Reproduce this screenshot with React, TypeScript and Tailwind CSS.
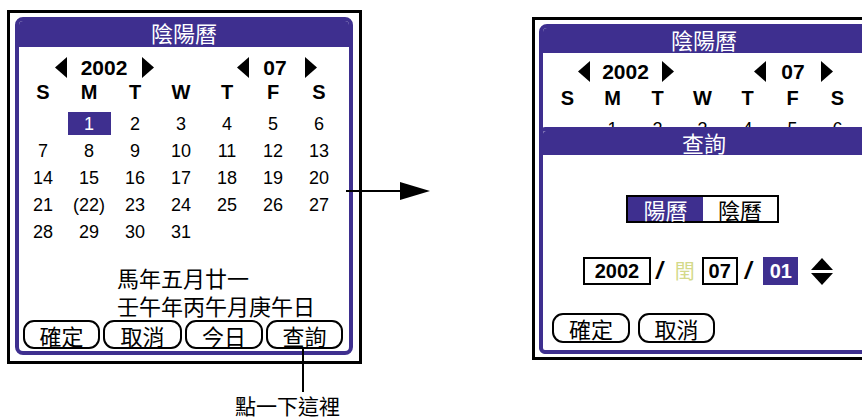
const LAT = "font-['Liberation_Sans',sans-serif]";
const CJK = "font-['Noto_Sans_CJK_TC','Noto_Sans_CJK_SC',sans-serif]";

const Tri = ({ dir }: { dir: "l" | "r" }) => (
  <svg width="12" height="21" viewBox="0 0 12 21" className="shrink-0">
    <polygon points={dir === "l" ? "12,0 12,21 0,10.5" : "0,0 0,21 12,10.5"} fill="black" />
  </svg>
);

const weekdays = ["S", "M", "T", "W", "T", "F", "S"];
const days: (string | null)[] = [
  null, "1", "2", "3", "4", "5", "6",
  "7", "8", "9", "10", "11", "12", "13",
  "14", "15", "16", "17", "18", "19", "20",
  "21", "(22)", "23", "24", "25", "26", "27",
  "28", "29", "30", "31", null, null, null,
];

const YearRow = ({ wide }: { wide: boolean }) => (
  <div className={`flex h-[22px] items-center ${LAT} text-[21px] font-bold leading-none ${wide ? "ml-[36px]" : "ml-[35px]"}`}>
    <Tri dir="l" />
    <span className={`text-center ${wide ? "ml-[13px] w-[48px]" : "ml-[11px] w-[49px]"}`}>2002</span>
    <span className={wide ? "ml-[14px]" : "ml-[12px]"}><Tri dir="r" /></span>
    <span className={wide ? "ml-[83px]" : "ml-[80px]"}><Tri dir="l" /></span>
    <span className={`text-center ${wide ? "ml-[14px] w-[24px]" : "ml-[15px] w-[24px]"}`}>07</span>
    <span className={wide ? "ml-[18px]" : "ml-[16px]"}><Tri dir="r" /></span>
  </div>
);

// wide = the full calendar on the left; narrow = the one half hidden under the dialog
const Calendar = ({ wide }: { wide: boolean }) => {
  const cols = wide ? "grid-cols-[repeat(7,46px)] ml-[1px]" : "grid-cols-[repeat(7,45px)] ml-[2px]";
  const shown = wide ? days : days.slice(0, 7);
  return (
    <>
      <div className={`grid ${cols} h-[20px] items-center ${LAT} text-[20px] font-bold leading-none ${wide ? "mt-[4px]" : "mt-[6px]"}`}>
        {weekdays.map((d, i) => (
          <span key={i} className="text-center">{d}</span>
        ))}
      </div>
      <div className={`grid ${cols} auto-rows-[27px] ${LAT} text-[18px] leading-none ${wide ? "mt-[8px]" : "mt-[7px]"}`}>
        {shown.map((d, i) => (
          <div key={i} className="flex items-center justify-center">
            {d === "1" && wide ? (
              <span className="flex h-[23px] w-[43px] items-center justify-center bg-[#3e2f8f] text-white">1</span>
            ) : (
              <span>{d}</span>
            )}
          </div>
        ))}
      </div>
    </>
  );
};

const Btn = ({ label, w }: { label: string; w: string }) => (
  <div className={`flex h-full ${w} items-center justify-center rounded-[11px] border-2 border-black ${CJK} text-[22px] leading-none`}>
    {label}
  </div>
);

const Slash = () => (
  <span className={`w-[8px] text-center ${LAT} text-[24px] font-bold italic leading-none`}>/</span>
);

const UpDown = () => (
  <svg width="22" height="27" viewBox="0 0 22 27" className="shrink-0">
    <polygon points="11,0 22,12 0,12" fill="black" />
    <polygon points="0,15 22,15 11,27" fill="black" />
  </svg>
);

export default function App() {
  return (
    <div className="relative flex h-[418px] w-[862px] items-start overflow-hidden bg-white text-black">
      {/* left: calendar screen */}
      <div className="ml-[7px] mt-[10px] flex shrink-0 flex-col">
        <div className="h-[354px] w-[355px] border-[3px] border-black bg-white pb-[6px] pl-[5px] pr-[6px] pt-[4px]">
          <div className="flex h-[338px] w-[338px] flex-col rounded-[8px] border-4 border-[#3e2f8f] bg-white">
            <div className={`h-[26px] shrink-0 rounded-t-[4px] bg-[#3e2f8f] text-center ${CJK} text-[22px] leading-[22px] text-white`}>
              陰陽曆
            </div>
            <div className="mt-[9px]">
              <YearRow wide />
            </div>
            <Calendar wide />
            <div className={`ml-[98px] mt-[18px] ${CJK} text-[22px] leading-[28px]`}>
              <div>馬年五月廿一</div>
              <div>壬午年丙午月庚午日</div>
            </div>
            <div className="ml-[4px] mt-[1px] flex h-[29px] gap-[3px]">
              <Btn label="確定" w="w-[77px]" />
              <Btn label="取消" w="w-[79px]" />
              <Btn label="今日" w="w-[78px]" />
              <Btn label="查詢" w="w-[77px]" />
            </div>
          </div>
        </div>
        <div className="relative -mt-[17px] ml-[295px] h-[45px] w-[2px] bg-black" />
        <div className={`ml-[228px] mt-[3px] ${CJK} text-[21px] leading-none`}>點一下這裡</div>
      </div>

      {/* right: lookup dialog over the calendar */}
      <div className="ml-[170px] mt-[17px] h-[343px] w-[346px] shrink-0 border-[3px] border-black bg-white pb-[3px] pl-[4px] pt-[4px]">
        <div className="relative flex h-[330px] w-[330px] flex-col rounded-[8px] border-4 border-[#3e2f8f] bg-white">
          <div className={`h-[25px] shrink-0 rounded-t-[4px] bg-[#3e2f8f] text-center ${CJK} text-[22px] leading-[22px] text-white`}>
            陰陽曆
          </div>
          <div className="mt-[7px]">
            <YearRow wide={false} />
          </div>
          <Calendar wide={false} />

          <div className="absolute -bottom-[4px] -left-[4px] -right-[4px] top-[99px] flex flex-col rounded-[6px] border-4 border-[#3e2f8f] bg-white">
            <div className={`h-[24px] shrink-0 rounded-t-[3px] bg-[#3e2f8f] pl-[139px] ${CJK} text-[22px] leading-[22px] text-white`}>
              查詢
            </div>
            <div className={`ml-[83px] mt-[40px] flex h-[28px] w-[153px] border-2 border-black ${CJK} text-[22px] leading-none`}>
              <div className="flex w-[75px] items-center justify-center bg-[#3e2f8f] text-white">陽曆</div>
              <div className="flex flex-1 items-center justify-center bg-white">陰曆</div>
            </div>
            <div className={`ml-[40px] mt-[34px] flex h-[28px] items-center ${LAT} text-[20px] font-bold leading-none`}>
              <div className="flex h-[28px] w-[68px] items-center justify-center border-2 border-black">2002</div>
              <span className="ml-[5px]"><Slash /></span>
              <span className={`ml-[11px] w-[22px] text-center ${CJK} text-[20px] font-normal text-[#d4d98a]`}>閏</span>
              <div className="ml-[6px] flex h-[28px] w-[36px] items-center justify-center border-2 border-black">07</div>
              <span className="ml-[7px]"><Slash /></span>
              <div className="ml-[12px] flex h-[28px] w-[35px] items-center justify-center bg-[#3e2f8f] text-white">01</div>
              <span className="ml-[13px] flex"><UpDown /></span>
            </div>
            <div className="ml-[9px] mt-[28px] flex h-[30px] gap-[8px]">
              <Btn label="確定" w="w-[78px]" />
              <Btn label="取消" w="w-[77px]" />
            </div>
          </div>
        </div>
      </div>

      {/* arrow between the two screens */}
      <svg className="absolute left-[346px] top-[181px]" width="86" height="20" viewBox="0 0 86 20">
        <line x1="0" y1="10" x2="56" y2="10" stroke="black" strokeWidth="2" />
        <polygon points="54,1 84,10 54,19" fill="black" />
      </svg>
    </div>
  );
}
